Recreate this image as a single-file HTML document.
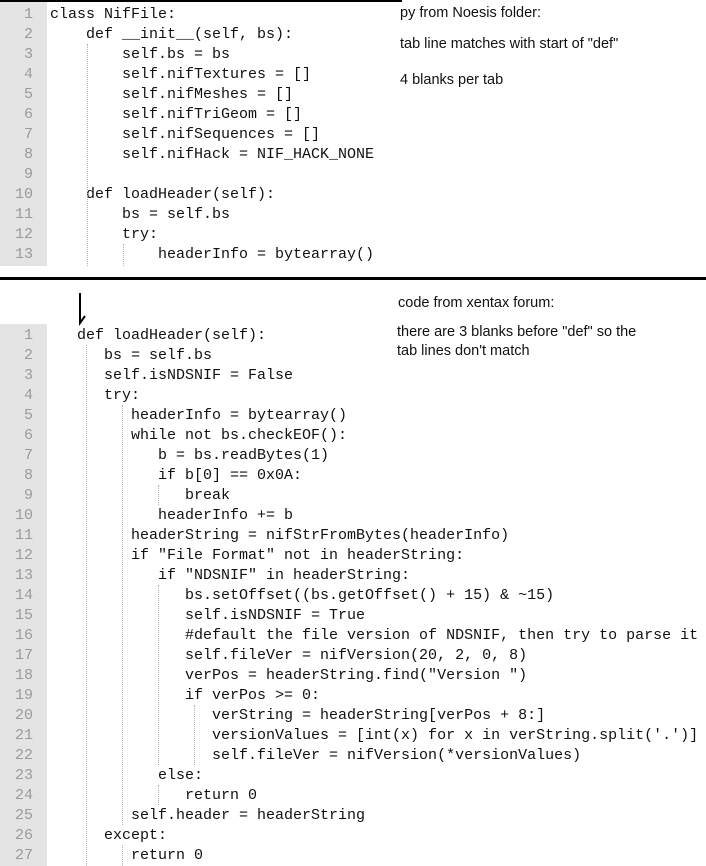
<!DOCTYPE html>
<html><head><meta charset="utf-8"><style>
body{margin:0;width:706px;height:866px;background:#fff;position:relative;overflow:hidden}
.g{position:absolute;left:0;width:47px;background:#e4e4e4}
.ln{position:absolute;left:0;width:33px;text-align:right;font:15px/20px "Liberation Mono",monospace;color:#9a9a9a}
.c{position:absolute;left:50px;font:15px/20px "Liberation Mono",monospace;color:#111;white-space:pre;margin:0}
.v{position:absolute;width:0;border-left:1px dotted #b0b0b0}
.t{position:absolute;font:14.5px "Liberation Sans",Arial,sans-serif;color:#111;white-space:nowrap}
</style></head><body>
<div style="position:absolute;left:0;top:0;width:402px;height:2px;background:#000"></div>
<div class="g" style="top:2px;height:264px"></div>
<div class="ln" style="top:5px">1<br>2<br>3<br>4<br>5<br>6<br>7<br>8<br>9<br>10<br>11<br>12<br>13</div>
<pre class="c" style="top:5px">class NifFile:
    def __init__(self, bs):
        self.bs = bs
        self.nifTextures = []
        self.nifMeshes = []
        self.nifTriGeom = []
        self.nifSequences = []
        self.nifHack = NIF_HACK_NONE

    def loadHeader(self):
        bs = self.bs
        try:
            headerInfo = bytearray()</pre>
<div class="v" style="left:87px;top:44px;height:222px"></div>
<div class="v" style="left:123px;top:244px;height:22px"></div>
<div class="t" style="left:400px;top:5px">py from Noesis folder:</div>
<div class="t" style="left:400px;top:36px">tab line matches with start of "def"</div>
<div class="t" style="left:400px;top:72px">4 blanks per tab</div>

<div style="position:absolute;left:0;top:277px;width:706px;height:3px;background:#000"></div>
<svg style="position:absolute;left:0;top:0" width="706" height="866"><path d="M80 293 L80 323 L85 316" fill="none" stroke="#000" stroke-width="2"/></svg>
<div class="t" style="left:398px;top:295px">code from xentax forum:</div>
<div class="t" style="left:397px;top:324px">there are 3 blanks before "def" so the</div>
<div class="t" style="left:397px;top:343px">tab lines don't match</div>

<div class="g" style="top:324px;height:542px"></div>
<div class="ln" style="top:326px">1<br>2<br>3<br>4<br>5<br>6<br>7<br>8<br>9<br>10<br>11<br>12<br>13<br>14<br>15<br>16<br>17<br>18<br>19<br>20<br>21<br>22<br>23<br>24<br>25<br>26<br>27</div>
<pre class="c" style="top:326px">   def loadHeader(self):
      bs = self.bs
      self.isNDSNIF = False
      try:
         headerInfo = bytearray()
         while not bs.checkEOF():
            b = bs.readBytes(1)
            if b[0] == 0x0A:
               break
            headerInfo += b
         headerString = nifStrFromBytes(headerInfo)
         if "File Format" not in headerString:
            if "NDSNIF" in headerString:
               bs.setOffset((bs.getOffset() + 15) &amp; ~15)
               self.isNDSNIF = True
               #default the file version of NDSNIF, then try to parse it
               self.fileVer = nifVersion(20, 2, 0, 8)
               verPos = headerString.find("Version ")
               if verPos &gt;= 0:
                  verString = headerString[verPos + 8:]
                  versionValues = [int(x) for x in verString.split('.')]
                  self.fileVer = nifVersion(*versionValues)
            else:
               return 0
         self.header = headerString
      except:
         return 0</pre>
<div class="v" style="left:86px;top:345px;height:521px"></div>
<div class="v" style="left:122px;top:405px;height:420px"></div>
<div class="v" style="left:122px;top:845px;height:21px"></div>
<div class="v" style="left:158px;top:485px;height:20px"></div>
<div class="v" style="left:158px;top:585px;height:180px"></div>
<div class="v" style="left:158px;top:785px;height:20px"></div>
<div class="v" style="left:194px;top:705px;height:60px"></div>
</body></html>
